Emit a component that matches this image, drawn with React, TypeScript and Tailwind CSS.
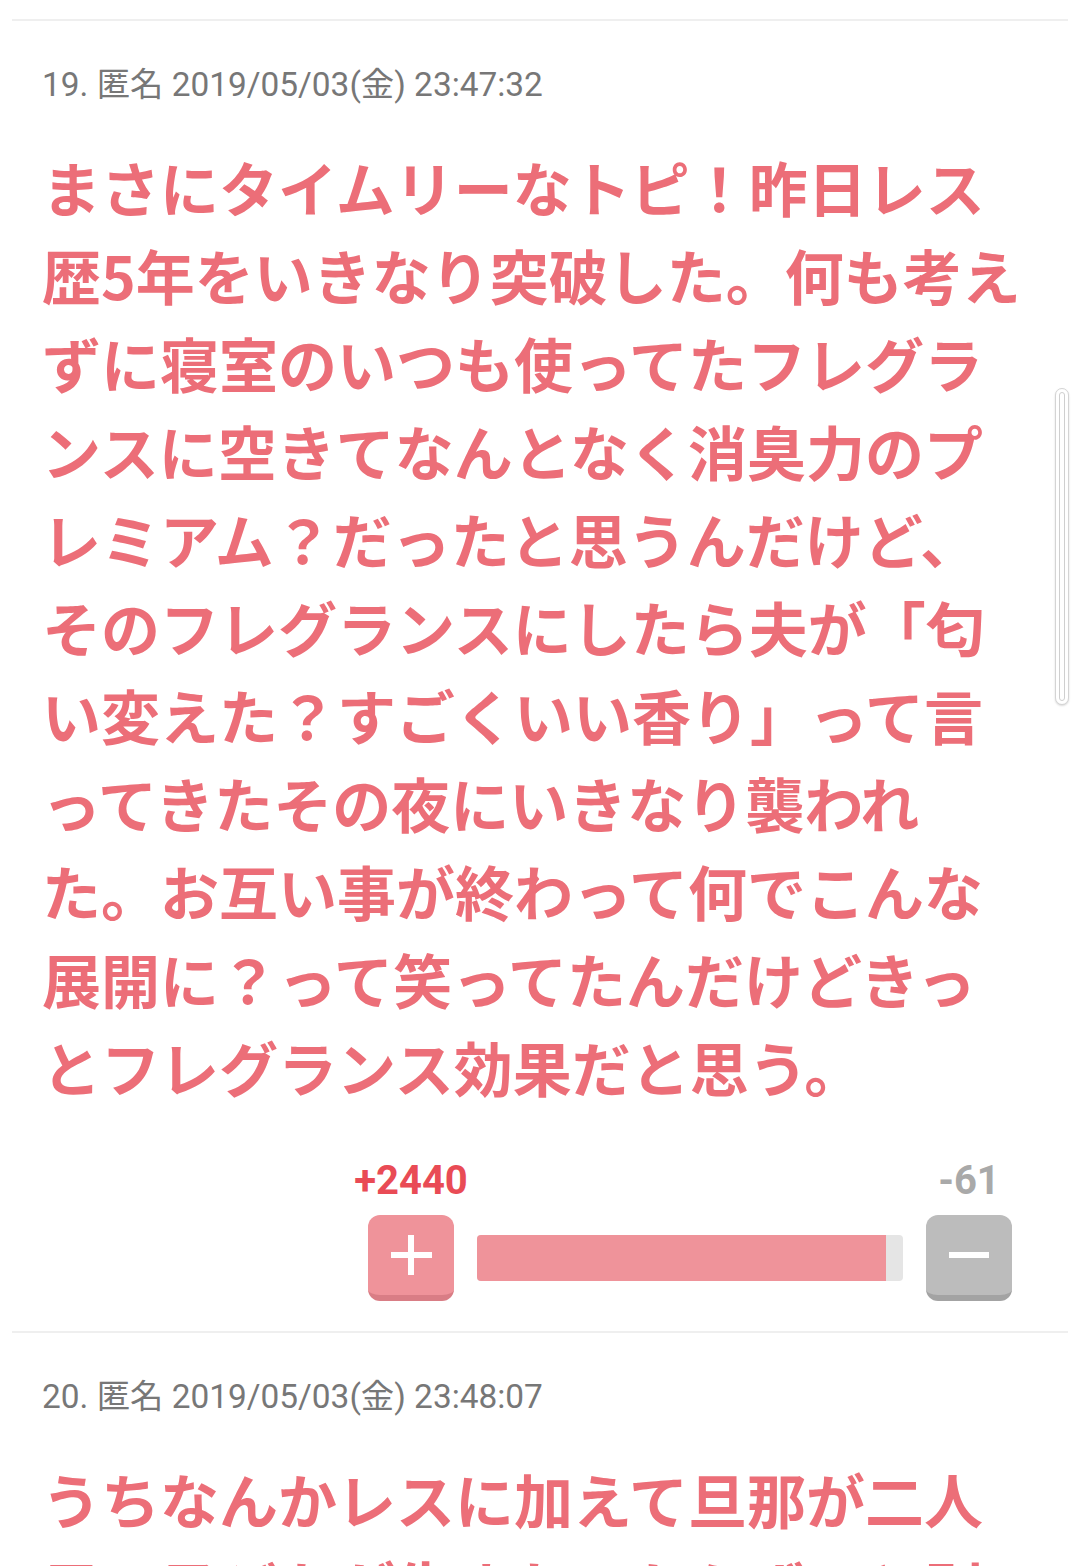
const jp = '"Noto Sans CJK JP", "Noto Sans", sans-serif';
const meta = 'Roboto, "Noto Sans CJK JP", sans-serif';

type Comment = {
  no: number;
  date: string;
  lines: string[];
  plus?: number;
  minus?: number;
};

const comments: Comment[] = [
  {
    no: 19,
    date: '2019/05/03(金) 23:47:32',
    lines: [
      'まさにタイムリーなトピ！昨日レス',
      '歴5年をいきなり突破した。何も考え',
      'ずに寝室のいつも使ってたフレグラ',
      'ンスに空きてなんとなく消臭力のプ',
      'レミアム？だったと思うんだけど、',
      'そのフレグランスにしたら夫が「匂',
      'い変えた？すごくいい香り」って言',
      'ってきたその夜にいきなり襲われ',
      'た。お互い事が終わって何でこんな',
      '展開に？って笑ってたんだけどきっ',
      'とフレグランス効果だと思う。',
    ],
    plus: 2440,
    minus: 61,
  },
  {
    no: 20,
    date: '2019/05/03(金) 23:48:07',
    lines: ['うちなんかレスに加えて旦那が二人', '目の子どもが生まれてからずっと別'],
  },
];

function VoteBar({ plus, minus }: { plus: number; minus: number }) {
  // bar keeps a little grey at the end even for lopsided votes
  const ratio = (plus / (plus + minus)) * 98.5;
  return (
    <div className="flex justify-end pr-[56px] pt-[48px]">
      <div className="flex items-end gap-[23px]">
        <div className="flex w-[86px] flex-col items-center">
          <span
            className="text-[40px] font-bold leading-[44px] text-[#e94b55]"
            style={{ fontFamily: meta }}
          >
            +{plus}
          </span>
          <button className="relative mt-[12px] flex h-[86px] w-[86px] items-center justify-center rounded-[12px] border-b-[6px] border-[#d97d85] bg-[#ef939a]">
            <span className="absolute h-[6px] w-[41px] bg-white" />
            <span className="absolute h-[40px] w-[6px] bg-white" />
          </button>
        </div>
        <div className="mb-[20px] flex h-[46px] w-[426px] overflow-hidden rounded-[4px] bg-[#e5e5e5]">
          <div className="h-full bg-[#ef939a]" style={{ width: `${ratio}%` }} />
        </div>
        <div className="flex w-[86px] flex-col items-center">
          <span
            className="text-[40px] font-bold leading-[44px] text-[#a9a9a9]"
            style={{ fontFamily: meta }}
          >
            -{minus}
          </span>
          <button className="relative mt-[12px] flex h-[86px] w-[86px] items-center justify-center rounded-[12px] border-b-[6px] border-[#a3a3a3] bg-[#bcbcbc]">
            <span className="absolute h-[6px] w-[40px] bg-white" />
          </button>
        </div>
      </div>
    </div>
  );
}

function CommentItem({ c }: { c: Comment }) {
  return (
    <article className="border-t-2 border-[#efefef] pb-[30px]">
      <div
        className="px-[30px] pt-[44px] text-[33.4px] leading-[40px] text-[#777777]"
        style={{ fontFamily: meta }}
      >
        {c.no}. 匿名 {c.date}
      </div>
      <div
        className="mt-[38px] px-[30px] text-[59px] font-bold leading-[88px] text-[#ec6e78]"
        style={{ fontFamily: jp }}
      >
        {c.lines.map((l, i) => (
          <div key={i} className="whitespace-nowrap">
            {l}
          </div>
        ))}
      </div>
      {c.plus !== undefined && c.minus !== undefined && (
        <VoteBar plus={c.plus} minus={c.minus} />
      )}
    </article>
  );
}

export default function App() {
  return (
    <div className="relative h-[1566px] w-[1080px] overflow-hidden bg-white">
      <div className="px-[12px] pt-[19px]">
        {comments.map((c) => (
          <CommentItem key={c.no} c={c} />
        ))}
      </div>
      {/* scroll indicator */}
      <div className="absolute left-[1055px] top-[388px] flex h-[317px] w-[14px] rounded-full border border-[#d4d4d4] bg-white p-[3px] shadow-[0_1px_2px_rgba(0,0,0,0.15)]">
        <div className="flex-1 rounded-full border border-[#cfcfcf]" />
      </div>
    </div>
  );
}
